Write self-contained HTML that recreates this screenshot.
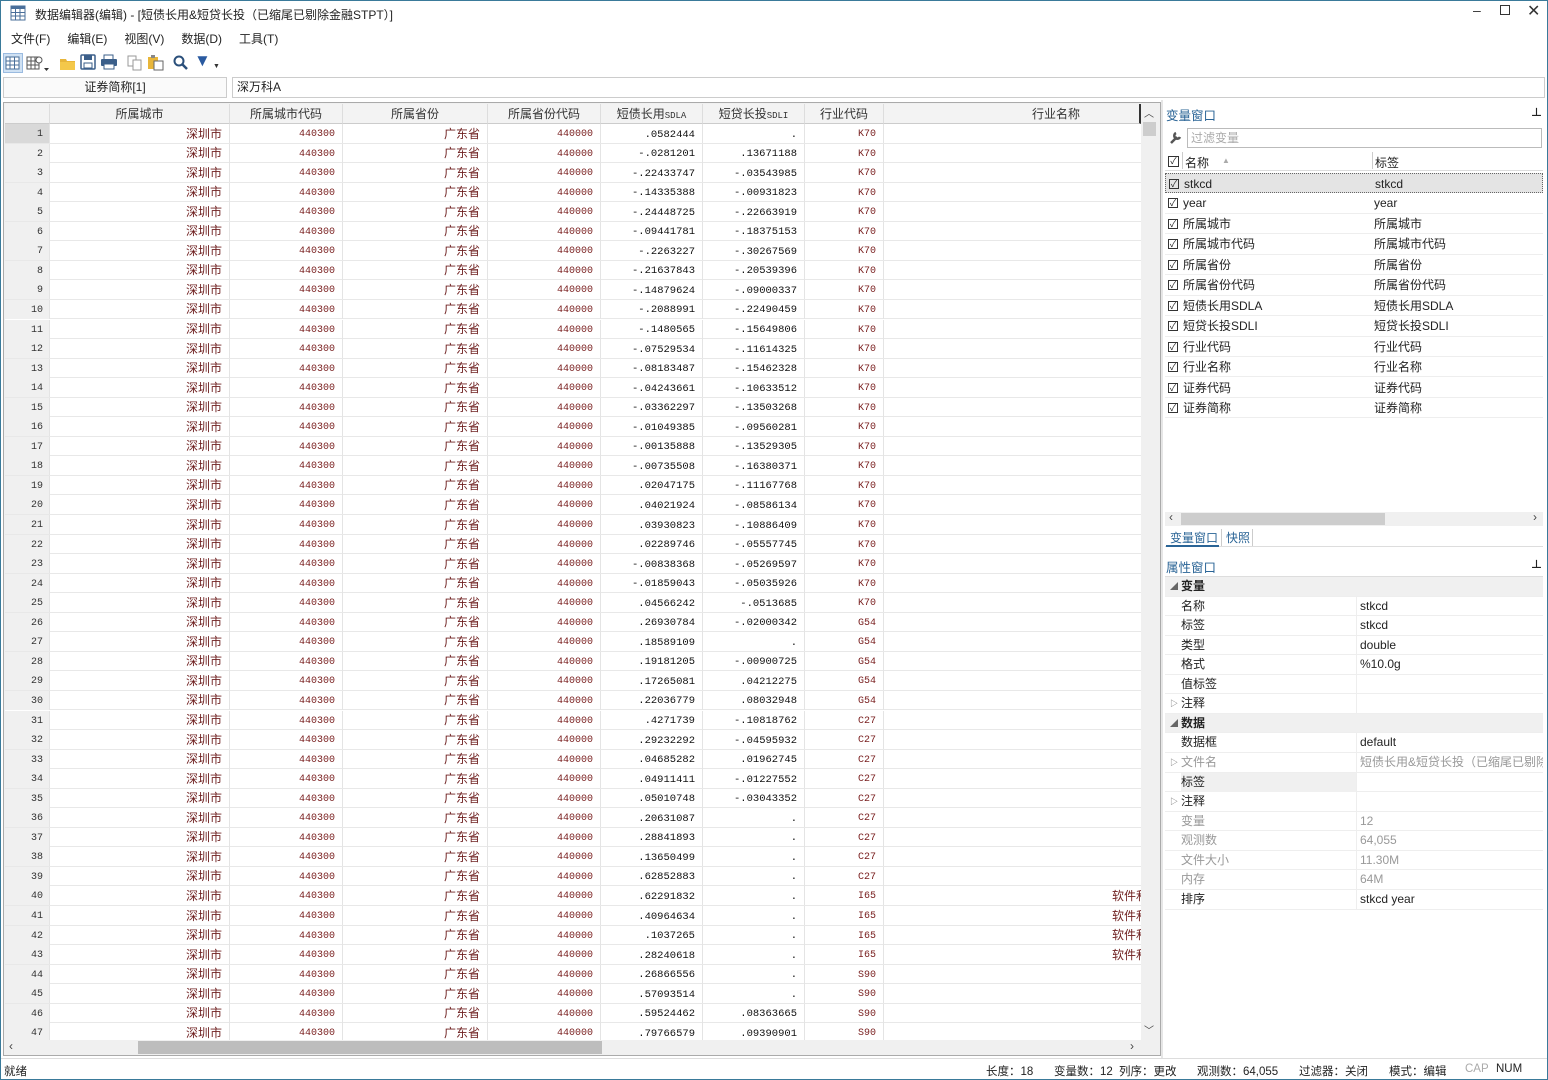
<!DOCTYPE html>
<html><head><meta charset="utf-8">
<style>
*{box-sizing:border-box;margin:0;padding:0}
body{width:1548px;height:1080px;overflow:hidden;background:#fff;position:relative;font-family:"Liberation Sans","Noto Sans CJK SC",sans-serif;font-size:12px;color:#222}
.a{position:absolute}
.menu span{margin-right:17px}
#grid{position:absolute;left:5px;top:104px;width:1136px;height:936px;overflow:hidden;background:#fff}
.hd{position:absolute;top:0;height:20px;background:#f3f3f3;border-right:1px solid #ddd;border-bottom:1px solid #ccc;text-align:center;line-height:20px;font-size:12px;color:#333}
.r{position:absolute;left:0;width:1136px;height:19.55px;border-bottom:1px solid #e8e8e8}
.r>*{position:absolute;top:0;height:19px;display:flex;align-items:center;justify-content:flex-end;padding-right:7px;border-right:1px solid #e4e4e4;font-style:normal;text-decoration:none;font-weight:normal;overflow:hidden;white-space:nowrap}
.r>i,.r>u,.r>s{padding-top:2px}
.r>b,.r>em{padding-bottom:1px}
.r>:nth-child(1){left:0;width:45px;background:#f0f0f0;color:#333;font-family:"Liberation Mono",monospace;font-size:10px;padding-right:6px}
.r>:nth-child(2){left:45px;width:180px;color:#6e1f1f;font-size:12px}
.r>:nth-child(3){left:225px;width:113px;color:#7a2020;font-family:"Liberation Mono",monospace;font-size:10px}
.r>:nth-child(4){left:338px;width:145px;color:#6e1f1f;font-size:12px}
.r>:nth-child(5){left:483px;width:113px;color:#7a2020;font-family:"Liberation Mono",monospace;font-size:10px}
.r>:nth-child(6){left:596px;width:102px;color:#111;font-family:"Liberation Mono",monospace;font-size:10.5px}
.r>:nth-child(7){left:698px;width:102px;color:#111;font-family:"Liberation Mono",monospace;font-size:10.5px}
.r>:nth-child(8){left:800px;width:79px;color:#7a2020;font-family:"Liberation Mono",monospace;font-size:10px}
.r>:nth-child(9){left:879px;width:257px;color:#6e1f1f;font-size:12px;padding-right:0;border-right:none;justify-content:flex-start;padding-left:228px}
.r.sel>:nth-child(1){background:#d9d9d9}
.vl{position:absolute;left:1165px;width:378px;height:20.45px;border-bottom:1px solid #eee;line-height:20px;font-size:12px}
.vl .cb{position:absolute;left:3px;top:5px;width:10px;height:10px;border:1px solid #333;font-size:9px;line-height:8px;text-align:center}
.vl .n{position:absolute;left:18px}
.vl .l{position:absolute;left:209px}
.pr{position:absolute;left:1165px;width:378px;height:19.56px;border-bottom:1px solid #eee;line-height:19px;font-size:12px}
.pr .k{position:absolute;left:16px;width:175px}
.pr .v{position:absolute;left:191px;width:187px;padding-left:3px;border-left:1px solid #eee;height:19px;overflow:hidden;white-space:nowrap}
.pr.g{background:#f0f0f0;font-weight:bold}
.pr.g .k{left:16px}
.pr .ar{position:absolute;left:5px;font-size:8px;color:#666}
.gr{color:#999}
.st span{position:absolute;top:0}
</style></head><body>
<div class="a" style="left:0;top:0;width:1548px;height:1080px;border:1px solid #3a7a9a;pointer-events:none;z-index:5"></div>
<svg class="a" style="left:10px;top:5px" width="16" height="16"><rect x="1" y="1" width="14" height="14" fill="#fff" stroke="#4a6f9a"/><rect x="1" y="1" width="14" height="3" fill="#4a6f9a"/><path d="M1 7.5H15M1 11H15M5.5 4V15M10 4V15" stroke="#4a6f9a" stroke-width="1"/></svg>
<div class="a" style="left:35px;top:6px;font-size:12px;color:#222">数据编辑器(编辑) - [短债长用&amp;短贷长投（已缩尾已剔除金融STPT）]</div>
<div class="a" style="left:1473px;top:2px;font-size:14px;color:#333">–</div>
<div class="a" style="left:1500px;top:5px;width:10px;height:10px;border:1px solid #333"></div>
<div class="a" style="left:1527px;top:1px;font-size:16px;color:#333">✕</div>
<div class="a menu" style="left:11px;top:30px;font-size:12px"><span>文件(F)</span><span>编辑(E)</span><span>视图(V)</span><span>数据(D)</span><span>工具(T)</span></div>
<div class="a" style="left:3px;top:53px;width:20px;height:20px;background:#cfe1f3;border:1px solid #9bbbe0"></div>
<svg class="a" style="left:5px;top:55px" width="16" height="16"><rect x="1" y="2" width="13" height="12" fill="#fff" stroke="#4a6f9a"/><path d="M1 6H14M1 10H14M5 2V14M9.5 2V14" stroke="#4a6f9a"/></svg>
<svg class="a" style="left:26px;top:55px" width="28" height="18"><rect x="1" y="2" width="12" height="12" fill="#fff" stroke="#555"/><path d="M1 6H13M1 10H13M5 2V14M9 2V14" stroke="#555"/><circle cx="13" cy="5" r="3" fill="#fff" stroke="#555"/><path d="M18 13h5l-2.5 3z" fill="#333"/></svg>
<svg class="a" style="left:59px;top:55px" width="18" height="16"><path d="M1 4h6l1 2h8v9H1z" fill="#e8b63a"/><path d="M1 7h15v8H1z" fill="#f4c84a"/></svg>
<svg class="a" style="left:80px;top:54px" width="16" height="16"><rect x="1" y="1" width="14" height="14" rx="1" fill="#fff" stroke="#3b5f8a" stroke-width="1.5"/><rect x="4" y="1" width="8" height="5" fill="#3b5f8a"/><rect x="4" y="9" width="8" height="5" fill="#fff" stroke="#3b5f8a"/></svg>
<svg class="a" style="left:100px;top:54px" width="18" height="16"><rect x="4" y="1" width="9" height="5" fill="#fff" stroke="#3b5f8a"/><rect x="1" y="5" width="16" height="7" rx="1" fill="#3b5f8a"/><rect x="4" y="10" width="10" height="5" fill="#fff" stroke="#3b5f8a"/></svg>
<svg class="a" style="left:127px;top:55px" width="16" height="16"><rect x="1" y="1" width="8" height="10" fill="#fff" stroke="#999"/><rect x="6" y="5" width="8" height="10" fill="#fff" stroke="#999"/></svg>
<svg class="a" style="left:147px;top:54px" width="18" height="17"><rect x="1" y="3" width="10" height="12" fill="#e8b63a"/><rect x="4" y="1" width="4" height="3" fill="#888"/><rect x="7" y="7" width="9" height="9" fill="#fff" stroke="#666"/></svg>
<svg class="a" style="left:173px;top:55px" width="16" height="16"><circle cx="6" cy="6" r="4.5" fill="none" stroke="#2a4f7a" stroke-width="2"/><path d="M9.5 9.5L14 14" stroke="#2a4f7a" stroke-width="2.5"/></svg>
<div class="a" style="left:194px;top:51px;font-size:17px;color:#2a5aa0">▼</div>
<div class="a" style="left:213px;top:63px;font-size:7px;color:#333">▼</div>
<div class="a" style="left:3px;top:77px;width:224px;height:21px;border:1px solid #ccc;background:#fafafa;text-align:center;line-height:19px;font-size:12px">证券简称[1]</div>
<div class="a" style="left:232px;top:77px;width:1313px;height:21px;border:1px solid #ccc;line-height:19px;padding-left:4px;font-size:12px">深万科A</div>
<div class="a" style="left:3px;top:102px;width:1158px;height:954px;border:1px solid #aaa;background:#f0f0f0"></div>
<div id="grid">
<div class="hd" style="left:0;width:45px"></div>
<div class="hd" style="left:45px;width:180px">所属城市</div>
<div class="hd" style="left:225px;width:113px">所属城市代码</div>
<div class="hd" style="left:338px;width:145px">所属省份</div>
<div class="hd" style="left:483px;width:113px">所属省份代码</div>
<div class="hd" style="left:596px;width:102px">短债长用<span style="font-family:'Liberation Mono';font-size:9px">SDLA</span></div>
<div class="hd" style="left:698px;width:102px">短贷长投<span style="font-family:'Liberation Mono';font-size:9px">SDLI</span></div>
<div class="hd" style="left:800px;width:79px">行业代码</div>
<div class="hd" style="left:879px;width:257px;border-right:2px solid #333;text-align:left;padding-left:148px">行业名称</div>
<div style="position:absolute;top:20px;left:0;width:1136px;height:916px">
<div class="r sel" style="top:0px"><i>1</i><b>深圳市</b><u>440300</u><b>广东省</b><u>440000</u><s>.0582444</s><s>.</s><u>K70</u><em></em></div>
<div class="r" style="top:19.55px"><i>2</i><b>深圳市</b><u>440300</u><b>广东省</b><u>440000</u><s>-.0281201</s><s>.13671188</s><u>K70</u><em></em></div>
<div class="r" style="top:39.1px"><i>3</i><b>深圳市</b><u>440300</u><b>广东省</b><u>440000</u><s>-.22433747</s><s>-.03543985</s><u>K70</u><em></em></div>
<div class="r" style="top:58.65px"><i>4</i><b>深圳市</b><u>440300</u><b>广东省</b><u>440000</u><s>-.14335388</s><s>-.00931823</s><u>K70</u><em></em></div>
<div class="r" style="top:78.2px"><i>5</i><b>深圳市</b><u>440300</u><b>广东省</b><u>440000</u><s>-.24448725</s><s>-.22663919</s><u>K70</u><em></em></div>
<div class="r" style="top:97.75px"><i>6</i><b>深圳市</b><u>440300</u><b>广东省</b><u>440000</u><s>-.09441781</s><s>-.18375153</s><u>K70</u><em></em></div>
<div class="r" style="top:117.3px"><i>7</i><b>深圳市</b><u>440300</u><b>广东省</b><u>440000</u><s>-.2263227</s><s>-.30267569</s><u>K70</u><em></em></div>
<div class="r" style="top:136.85px"><i>8</i><b>深圳市</b><u>440300</u><b>广东省</b><u>440000</u><s>-.21637843</s><s>-.20539396</s><u>K70</u><em></em></div>
<div class="r" style="top:156.4px"><i>9</i><b>深圳市</b><u>440300</u><b>广东省</b><u>440000</u><s>-.14879624</s><s>-.09000337</s><u>K70</u><em></em></div>
<div class="r" style="top:175.95px"><i>10</i><b>深圳市</b><u>440300</u><b>广东省</b><u>440000</u><s>-.2088991</s><s>-.22490459</s><u>K70</u><em></em></div>
<div class="r" style="top:195.5px"><i>11</i><b>深圳市</b><u>440300</u><b>广东省</b><u>440000</u><s>-.1480565</s><s>-.15649806</s><u>K70</u><em></em></div>
<div class="r" style="top:215.05px"><i>12</i><b>深圳市</b><u>440300</u><b>广东省</b><u>440000</u><s>-.07529534</s><s>-.11614325</s><u>K70</u><em></em></div>
<div class="r" style="top:234.6px"><i>13</i><b>深圳市</b><u>440300</u><b>广东省</b><u>440000</u><s>-.08183487</s><s>-.15462328</s><u>K70</u><em></em></div>
<div class="r" style="top:254.15px"><i>14</i><b>深圳市</b><u>440300</u><b>广东省</b><u>440000</u><s>-.04243661</s><s>-.10633512</s><u>K70</u><em></em></div>
<div class="r" style="top:273.7px"><i>15</i><b>深圳市</b><u>440300</u><b>广东省</b><u>440000</u><s>-.03362297</s><s>-.13503268</s><u>K70</u><em></em></div>
<div class="r" style="top:293.25px"><i>16</i><b>深圳市</b><u>440300</u><b>广东省</b><u>440000</u><s>-.01049385</s><s>-.09560281</s><u>K70</u><em></em></div>
<div class="r" style="top:312.8px"><i>17</i><b>深圳市</b><u>440300</u><b>广东省</b><u>440000</u><s>-.00135888</s><s>-.13529305</s><u>K70</u><em></em></div>
<div class="r" style="top:332.35px"><i>18</i><b>深圳市</b><u>440300</u><b>广东省</b><u>440000</u><s>-.00735508</s><s>-.16380371</s><u>K70</u><em></em></div>
<div class="r" style="top:351.9px"><i>19</i><b>深圳市</b><u>440300</u><b>广东省</b><u>440000</u><s>.02047175</s><s>-.11167768</s><u>K70</u><em></em></div>
<div class="r" style="top:371.45px"><i>20</i><b>深圳市</b><u>440300</u><b>广东省</b><u>440000</u><s>.04021924</s><s>-.08586134</s><u>K70</u><em></em></div>
<div class="r" style="top:391px"><i>21</i><b>深圳市</b><u>440300</u><b>广东省</b><u>440000</u><s>.03930823</s><s>-.10886409</s><u>K70</u><em></em></div>
<div class="r" style="top:410.55px"><i>22</i><b>深圳市</b><u>440300</u><b>广东省</b><u>440000</u><s>.02289746</s><s>-.05557745</s><u>K70</u><em></em></div>
<div class="r" style="top:430.1px"><i>23</i><b>深圳市</b><u>440300</u><b>广东省</b><u>440000</u><s>-.00838368</s><s>-.05269597</s><u>K70</u><em></em></div>
<div class="r" style="top:449.65px"><i>24</i><b>深圳市</b><u>440300</u><b>广东省</b><u>440000</u><s>-.01859043</s><s>-.05035926</s><u>K70</u><em></em></div>
<div class="r" style="top:469.2px"><i>25</i><b>深圳市</b><u>440300</u><b>广东省</b><u>440000</u><s>.04566242</s><s>-.0513685</s><u>K70</u><em></em></div>
<div class="r" style="top:488.75px"><i>26</i><b>深圳市</b><u>440300</u><b>广东省</b><u>440000</u><s>.26930784</s><s>-.02000342</s><u>G54</u><em></em></div>
<div class="r" style="top:508.3px"><i>27</i><b>深圳市</b><u>440300</u><b>广东省</b><u>440000</u><s>.18589109</s><s>.</s><u>G54</u><em></em></div>
<div class="r" style="top:527.85px"><i>28</i><b>深圳市</b><u>440300</u><b>广东省</b><u>440000</u><s>.19181205</s><s>-.00900725</s><u>G54</u><em></em></div>
<div class="r" style="top:547.4px"><i>29</i><b>深圳市</b><u>440300</u><b>广东省</b><u>440000</u><s>.17265081</s><s>.04212275</s><u>G54</u><em></em></div>
<div class="r" style="top:566.95px"><i>30</i><b>深圳市</b><u>440300</u><b>广东省</b><u>440000</u><s>.22036779</s><s>.08032948</s><u>G54</u><em></em></div>
<div class="r" style="top:586.5px"><i>31</i><b>深圳市</b><u>440300</u><b>广东省</b><u>440000</u><s>.4271739</s><s>-.10818762</s><u>C27</u><em></em></div>
<div class="r" style="top:606.05px"><i>32</i><b>深圳市</b><u>440300</u><b>广东省</b><u>440000</u><s>.29232292</s><s>-.04595932</s><u>C27</u><em></em></div>
<div class="r" style="top:625.6px"><i>33</i><b>深圳市</b><u>440300</u><b>广东省</b><u>440000</u><s>.04685282</s><s>.01962745</s><u>C27</u><em></em></div>
<div class="r" style="top:645.15px"><i>34</i><b>深圳市</b><u>440300</u><b>广东省</b><u>440000</u><s>.04911411</s><s>-.01227552</s><u>C27</u><em></em></div>
<div class="r" style="top:664.7px"><i>35</i><b>深圳市</b><u>440300</u><b>广东省</b><u>440000</u><s>.05010748</s><s>-.03043352</s><u>C27</u><em></em></div>
<div class="r" style="top:684.25px"><i>36</i><b>深圳市</b><u>440300</u><b>广东省</b><u>440000</u><s>.20631087</s><s>.</s><u>C27</u><em></em></div>
<div class="r" style="top:703.8px"><i>37</i><b>深圳市</b><u>440300</u><b>广东省</b><u>440000</u><s>.28841893</s><s>.</s><u>C27</u><em></em></div>
<div class="r" style="top:723.35px"><i>38</i><b>深圳市</b><u>440300</u><b>广东省</b><u>440000</u><s>.13650499</s><s>.</s><u>C27</u><em></em></div>
<div class="r" style="top:742.9px"><i>39</i><b>深圳市</b><u>440300</u><b>广东省</b><u>440000</u><s>.62852883</s><s>.</s><u>C27</u><em></em></div>
<div class="r" style="top:762.45px"><i>40</i><b>深圳市</b><u>440300</u><b>广东省</b><u>440000</u><s>.62291832</s><s>.</s><u>I65</u><em>软件和信息技术服务业</em></div>
<div class="r" style="top:782px"><i>41</i><b>深圳市</b><u>440300</u><b>广东省</b><u>440000</u><s>.40964634</s><s>.</s><u>I65</u><em>软件和信息技术服务业</em></div>
<div class="r" style="top:801.55px"><i>42</i><b>深圳市</b><u>440300</u><b>广东省</b><u>440000</u><s>.1037265</s><s>.</s><u>I65</u><em>软件和信息技术服务业</em></div>
<div class="r" style="top:821.1px"><i>43</i><b>深圳市</b><u>440300</u><b>广东省</b><u>440000</u><s>.28240618</s><s>.</s><u>I65</u><em>软件和信息技术服务业</em></div>
<div class="r" style="top:840.65px"><i>44</i><b>深圳市</b><u>440300</u><b>广东省</b><u>440000</u><s>.26866556</s><s>.</s><u>S90</u><em></em></div>
<div class="r" style="top:860.2px"><i>45</i><b>深圳市</b><u>440300</u><b>广东省</b><u>440000</u><s>.57093514</s><s>.</s><u>S90</u><em></em></div>
<div class="r" style="top:879.75px"><i>46</i><b>深圳市</b><u>440300</u><b>广东省</b><u>440000</u><s>.59524462</s><s>.08363665</s><u>S90</u><em></em></div>
<div class="r" style="top:899.3px"><i>47</i><b>深圳市</b><u>440300</u><b>广东省</b><u>440000</u><s>.79766579</s><s>.09390901</s><u>S90</u><em></em></div>
</div>
</div>
<div class="a" style="left:1141px;top:104px;width:16px;height:936px;background:#f0f0f0"></div>
<div class="a" style="left:1144px;top:105px;font-size:10px;color:#444">︿</div>
<div class="a" style="left:1143px;top:122px;width:13px;height:14px;background:#cdcdcd"></div>
<div class="a" style="left:1144px;top:1022px;font-size:10px;color:#444">﹀</div>
<div class="a" style="left:5px;top:1040px;width:1152px;height:15px;background:#f0f0f0"></div>
<div class="a" style="left:9px;top:1039px;font-size:12px;color:#444">‹</div>
<div class="a" style="left:138px;top:1041px;width:464px;height:13px;background:#bdbdbd"></div>
<div class="a" style="left:1130px;top:1039px;font-size:12px;color:#444">›</div>
<div class="a" style="left:1161px;top:100px;width:2px;height:960px;background:#e6e6e6"></div>
<div class="a" style="left:1166px;top:105px;font-size:12.5px;color:#2a6496">变量窗口</div>
<div class="a" style="left:1531px;top:104px;font-size:11px;font-weight:bold">⊥</div>
<svg class="a" style="left:1168px;top:130px" width="16" height="16"><path d="M3 13L9 7M8 3a3 3 0 1 0 4 4" stroke="#555" stroke-width="2.5" fill="none"/></svg>
<div class="a" style="left:1187px;top:128px;width:355px;height:20px;border:1px solid #bbb;line-height:18px;padding-left:3px;color:#aaa;font-size:12px">过滤变量</div>
<div class="a" style="left:1165px;top:152px;width:378px;height:19px;border-bottom:1px solid #ddd"></div>
<div class="a" style="left:1168px;top:156px;width:11px;height:11px;border:1px solid #333;font-size:9px;line-height:9px;text-align:center">✓</div>
<div class="a" style="left:1182px;top:152px;width:1px;height:17px;background:#ccc"></div>
<div class="a" style="left:1185px;top:154px;font-size:12px">名称</div>
<div class="a" style="left:1222px;top:156px;font-size:8px;color:#aaa">▲</div>
<div class="a" style="left:1372px;top:152px;width:1px;height:17px;background:#ccc"></div>
<div class="a" style="left:1375px;top:154px;font-size:12px">标签</div>
<div class="vl" style="top:173px;background:#e4e4e4;border:1px dotted #666"><span class="cb">✓</span><span class="n">stkcd</span><span class="l">stkcd</span></div>
<div class="vl" style="top:193.45px"><span class="cb">✓</span><span class="n">year</span><span class="l">year</span></div>
<div class="vl" style="top:213.9px"><span class="cb">✓</span><span class="n">所属城市</span><span class="l">所属城市</span></div>
<div class="vl" style="top:234.35px"><span class="cb">✓</span><span class="n">所属城市代码</span><span class="l">所属城市代码</span></div>
<div class="vl" style="top:254.8px"><span class="cb">✓</span><span class="n">所属省份</span><span class="l">所属省份</span></div>
<div class="vl" style="top:275.25px"><span class="cb">✓</span><span class="n">所属省份代码</span><span class="l">所属省份代码</span></div>
<div class="vl" style="top:295.7px"><span class="cb">✓</span><span class="n">短债长用SDLA</span><span class="l">短债长用SDLA</span></div>
<div class="vl" style="top:316.15px"><span class="cb">✓</span><span class="n">短贷长投SDLI</span><span class="l">短贷长投SDLI</span></div>
<div class="vl" style="top:336.6px"><span class="cb">✓</span><span class="n">行业代码</span><span class="l">行业代码</span></div>
<div class="vl" style="top:357.05px"><span class="cb">✓</span><span class="n">行业名称</span><span class="l">行业名称</span></div>
<div class="vl" style="top:377.5px"><span class="cb">✓</span><span class="n">证券代码</span><span class="l">证券代码</span></div>
<div class="vl" style="top:397.95px"><span class="cb">✓</span><span class="n">证券简称</span><span class="l">证券简称</span></div>
<div class="a" style="left:1165px;top:512px;width:378px;height:14px;background:#f0f0f0"></div>
<div class="a" style="left:1169px;top:510px;font-size:12px;color:#444">‹</div>
<div class="a" style="left:1181px;top:513px;width:204px;height:12px;background:#cdcdcd"></div>
<div class="a" style="left:1533px;top:510px;font-size:12px;color:#444">›</div>
<div class="a" style="left:1165px;top:546px;width:378px;height:1px;background:#ddd"></div>
<div class="a" style="left:1170px;top:529px;font-size:12px;color:#2a6496">变量窗口</div>
<div class="a" style="left:1166px;top:545px;width:53px;height:2px;background:#2a6496"></div>
<div class="a" style="left:1221px;top:529px;width:1px;height:17px;background:#ccc"></div>
<div class="a" style="left:1226px;top:529px;font-size:12px;color:#2a6496">快照</div>
<div class="a" style="left:1252px;top:529px;width:1px;height:17px;background:#ccc"></div>
<div class="a" style="left:1166px;top:557px;font-size:12.5px;color:#2a6496">属性窗口</div>
<div class="a" style="left:1531px;top:556px;font-size:11px;font-weight:bold">⊥</div>
<div class="a" style="left:1165px;top:576px;width:378px;height:1px;background:#ddd"></div>
<div class="pr g" style="top:577px"><span class="ar">◢</span><span class="k">变量</span></div>
<div class="pr" style="top:596.56px"><span class="k">名称</span><span class="v">stkcd</span></div>
<div class="pr" style="top:616.12px"><span class="k">标签</span><span class="v">stkcd</span></div>
<div class="pr" style="top:635.68px"><span class="k">类型</span><span class="v">double</span></div>
<div class="pr" style="top:655.24px"><span class="k">格式</span><span class="v">%10.0g</span></div>
<div class="pr" style="top:674.8px"><span class="k">值标签</span><span class="v"></span></div>
<div class="pr" style="top:694.36px"><span class="ar">▷</span><span class="k">注释</span><span class="v"></span></div>
<div class="pr g" style="top:713.92px"><span class="ar">◢</span><span class="k">数据</span></div>
<div class="pr" style="top:733.48px"><span class="k">数据框</span><span class="v">default</span></div>
<div class="pr gr" style="top:753.04px"><span class="ar">▷</span><span class="k">文件名</span><span class="v">短债长用&amp;短贷长投（已缩尾已剔除金融STPT）</span></div>
<div class="pr" style="top:772.6px"><span class="k" style="background:#f0f0f0;height:19px">标签</span><span class="v"></span></div>
<div class="pr" style="top:792.16px"><span class="ar">▷</span><span class="k">注释</span><span class="v"></span></div>
<div class="pr gr" style="top:811.72px"><span class="k">变量</span><span class="v">12</span></div>
<div class="pr gr" style="top:831.28px"><span class="k">观测数</span><span class="v">64,055</span></div>
<div class="pr gr" style="top:850.84px"><span class="k">文件大小</span><span class="v">11.30M</span></div>
<div class="pr gr" style="top:870.4px"><span class="k">内存</span><span class="v">64M</span></div>
<div class="pr" style="top:889.96px"><span class="k">排序</span><span class="v">stkcd year</span></div>
<div class="a" style="left:0;top:1058px;width:1548px;height:22px;background:#fff;border-top:1px solid #ddd"></div>
<div class="a st" style="left:0;top:1063px;width:1548px;height:16px;font-size:11.5px">
<span style="left:4px">就绪</span>
<span style="left:986px">长度：18</span>
<span style="left:1054px">变量数：12</span>
<span style="left:1119px">列序：更改</span>
<span style="left:1197px">观测数：64,055</span>
<span style="left:1299px">过滤器：关闭</span>
<span style="left:1389px">模式：编辑</span>
<span style="left:1465px;color:#aaa">CAP</span>
<span style="left:1496px">NUM</span>
</div>
</body></html>
